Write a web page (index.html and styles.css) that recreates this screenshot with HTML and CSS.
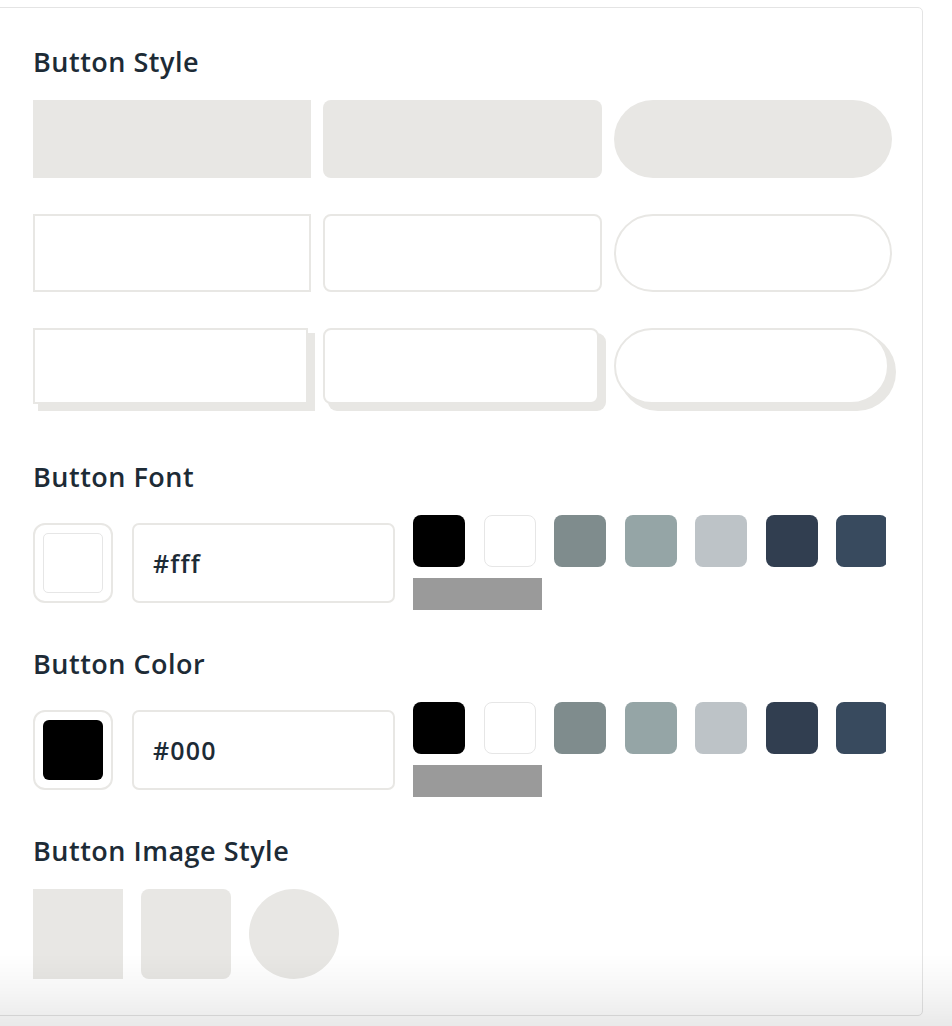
FILE: index.html
```html
<!DOCTYPE html>
<html lang="en">
<head>
<meta charset="utf-8">
<title>Button settings</title>
<link rel="stylesheet" href="styles.css">
</head>
<body>
<div class="card">
  <section class="section section-style">
    <h2 class="title">Button Style</h2>
    <div class="style-grid">
      <div class="opt fill sharp"></div>
      <div class="opt fill rounded"></div>
      <div class="opt fill pill"></div>
      <div class="opt outline sharp"></div>
      <div class="opt outline rounded"></div>
      <div class="opt outline pill"></div>
      <div class="cell"><div class="opt outline shadow sharp"></div></div>
      <div class="cell"><div class="opt outline shadow rounded"></div></div>
      <div class="cell"><div class="opt outline shadow pill"></div></div>
    </div>
  </section>

  <section class="section">
    <h2 class="title">Button Font</h2>
    <div class="picker">
      <div class="preview"><div class="preview-inner white"></div></div>
      <div class="hex">#fff</div>
      <div class="palette">
        <div class="swatches">
          <span class="sw" style="background:#000"></span>
          <span class="sw sw-white"></span>
          <span class="sw" style="background:#7f8c8d"></span>
          <span class="sw" style="background:#95a5a6"></span>
          <span class="sw" style="background:#bdc3c7"></span>
          <span class="sw" style="background:#313e50"></span>
          <span class="sw" style="background:#384a5e"></span>
        </div>
        <div class="bar"></div>
      </div>
    </div>
  </section>

  <section class="section">
    <h2 class="title">Button Color</h2>
    <div class="picker">
      <div class="preview"><div class="preview-inner black"></div></div>
      <div class="hex">#000</div>
      <div class="palette">
        <div class="swatches">
          <span class="sw" style="background:#000"></span>
          <span class="sw sw-white"></span>
          <span class="sw" style="background:#7f8c8d"></span>
          <span class="sw" style="background:#95a5a6"></span>
          <span class="sw" style="background:#bdc3c7"></span>
          <span class="sw" style="background:#313e50"></span>
          <span class="sw" style="background:#384a5e"></span>
        </div>
        <div class="bar"></div>
      </div>
    </div>
  </section>

  <section class="section section-last">
    <h2 class="title">Button Image Style</h2>
    <div class="shapes">
      <div class="shape"></div>
      <div class="shape shape-round"></div>
      <div class="shape shape-circle"></div>
    </div>
  </section>
</div>
<div class="fade"></div>
</body>
</html>
```

FILE: styles.css
```css
* { box-sizing: border-box; }

html, body {
  margin: 0;
  padding: 0;
  background: #fff;
}

body {
  font-family: "Open Sans", "Liberation Sans", sans-serif;
  color: #1d2b36;
  overflow: hidden;
  height: 1026px;
}

.card {
  margin: 7px 0 0 -6px;
  width: 929px;
  height: 1009px;
  border: 1px solid #e4e4e4;
  border-radius: 5px;
  padding: 38px 30px 0 38px;
  background: #fff;
}

.title {
  margin: 0 0 22px;
  font-size: 27px;
  line-height: 32px;
  font-weight: 600;
  letter-spacing: 0.5px;
}

.section { margin-bottom: 38px; }
.section-style { margin-bottom: 55px; }
.section-last { margin-bottom: 0; }

.style-grid {
  display: grid;
  grid-template-columns: repeat(3, 1fr);
  column-gap: 12px;
  row-gap: 36px;
}

.opt { height: 78px; }
.fill { background: #e8e7e4; }
.outline { border: 2px solid #e8e7e4; background: #fff; }
.sharp { border-radius: 0; }
.rounded { border-radius: 8px; }
.pill { border-radius: 40px; }

.cell { height: 78px; }
.shadow {
  width: calc(100% - 3px);
  height: 76px;
  box-shadow: 6px 6px 0 1px #e8e7e4;
}

.picker {
  display: flex;
  align-items: center;
}

.preview {
  width: 80px;
  height: 80px;
  border: 2px solid #e8e7e4;
  border-radius: 12px;
  padding: 8px;
  flex: none;
}

.preview-inner {
  width: 60px;
  height: 60px;
  border-radius: 5px;
}
.preview-inner.white { background: #fff; border: 1px solid #e6e6e6; }
.preview-inner.black { background: #000; border-radius: 6px; }

.hex {
  margin-left: 19px;
  width: 263px;
  height: 80px;
  border: 2px solid #e8e7e4;
  border-radius: 7px;
  padding-left: 19px;
  display: flex;
  align-items: center;
  font-size: 25px;
  font-weight: 600;
  letter-spacing: 1.2px;
  flex: none;
}

.palette {
  margin-left: 18px;
  width: 473px;
  overflow: hidden;
}

.swatches {
  display: flex;
  gap: 18.5px;
}

.sw {
  display: block;
  flex: none;
  width: 52px;
  height: 52px;
  border-radius: 8px;
}
.sw-white { background: #fff; border: 1px solid #e6e6e6; }

.bar {
  margin-top: 11px;
  width: 129px;
  height: 32px;
  background: #9a9a9a;
}

.shapes {
  display: flex;
  gap: 18px;
}

.shape {
  width: 90px;
  height: 90px;
  background: #e8e7e4;
}
.shape-round { border-radius: 8px; }
.shape-circle { border-radius: 50%; }

.fade {
  position: fixed;
  left: 0;
  right: 0;
  bottom: 0;
  height: 72px;
  pointer-events: none;
  background: linear-gradient(to bottom, rgba(0,0,0,0) 0%, rgba(0,0,0,0.035) 50%, rgba(0,0,0,0.085) 100%);
}
```
